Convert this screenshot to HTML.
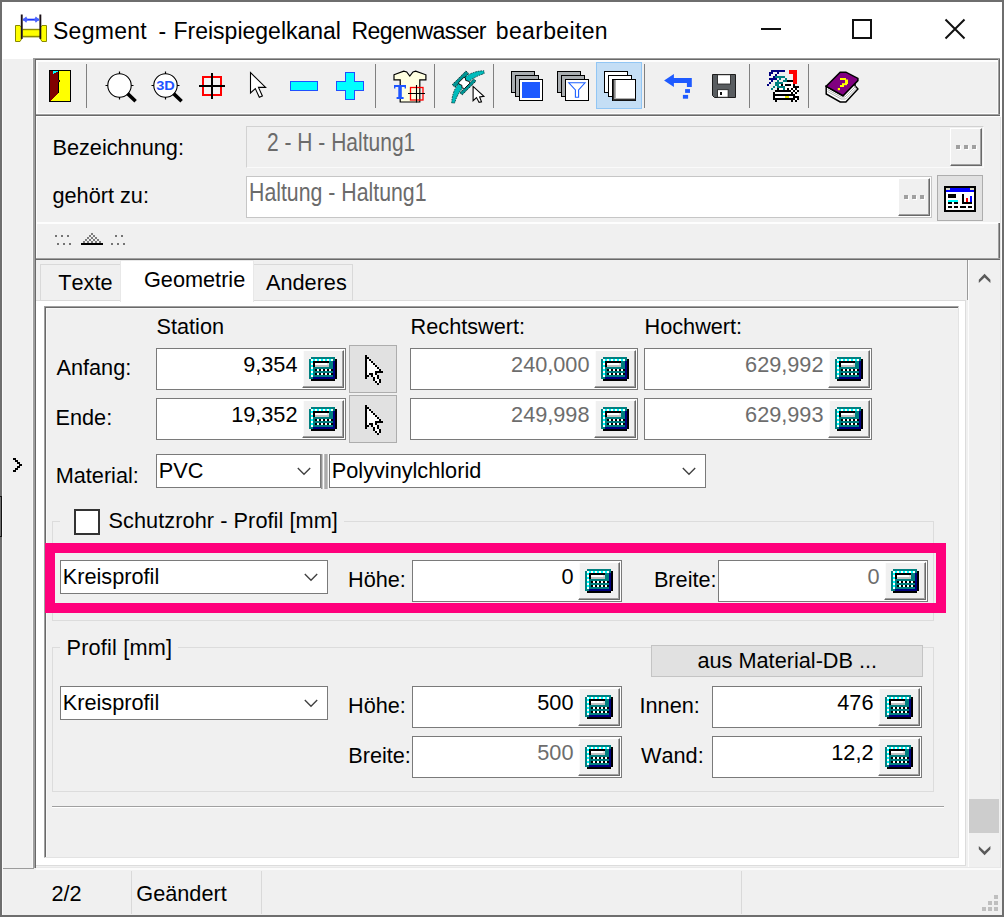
<!DOCTYPE html>
<html><head><meta charset="utf-8"><title>Segment</title>
<style>
html,body{margin:0;padding:0}
body{width:1004px;height:917px;position:relative;overflow:hidden;background:#f0f0f0;font-family:"Liberation Sans",sans-serif}
.a{position:absolute}
.t{position:absolute;white-space:nowrap;line-height:1;font-size:21.33px;font-kerning:none;font-variant-ligatures:none}
svg{display:block;overflow:visible}
</style></head><body>
<div class="a" style="left:0px;top:0px;width:1004px;height:917px;background:#6e6e6e"></div>
<div class="a" style="left:2px;top:2px;width:1000px;height:913px;background:#f0f0f0"></div>
<div class="a" style="left:2px;top:2px;width:1000px;height:57px;background:#fff"></div>
<div class="a" style="left:0px;top:496px;width:2px;height:41px;background:#141414"></div>
<div class="a" style="left:0px;top:497px;width:1px;height:39px;background:#6e6e6e"></div>
<div class="a" style="left:2px;top:59px;width:1px;height:856px;background:#fbfbfb"></div>
<svg class="a" style="left:15px;top:14px" width="32" height="28" viewBox="0 0 32 28"><path d="M0.5 11.5 H5 L6.5 13.5 V25 L5 27.5 H0.5 Z" fill="#ffff00" stroke="#8a8a00" stroke-width="1"/><path d="M31.5 11.5 H27 L25.5 13.5 V25 L27 27.5 H31.5 Z" fill="#ffff00" stroke="#8a8a00" stroke-width="1"/><rect x="7.5" y="14.8" width="17.5" height="8.6" fill="#8a8a00"/><rect x="7.5" y="16.2" width="17.5" height="5.6" fill="#ffff00"/><rect x="5.8" y="0.5" width="1.9" height="24.4" fill="#1a1018"/><rect x="24.4" y="0.5" width="1.9" height="24.4" fill="#1a1018"/><rect x="8" y="4.7" width="16" height="1.9" fill="#1a34ff"/><path d="M7.8 5.6 L11.2 2.4 L12.8 5.6 L11.2 8.8 Z M24.2 5.6 L20.8 2.4 L19.2 5.6 L20.8 8.8 Z" fill="#4a64ff"/></svg>
<span class="t tw" style="left:53px;top:20px;font-size:23px;letter-spacing:0.28px">Segment </span>
<span class="t tw" style="left:158.5px;top:20px;font-size:23px;letter-spacing:0px">- </span>
<span class="t tw" style="left:173.5px;top:20px;font-size:23px;letter-spacing:0px">Freispiegelkanal </span>
<span class="t tw" style="left:351.5px;top:20px;font-size:23px;letter-spacing:-0.56px">Regenwasser </span>
<span class="t tw" style="left:495.8px;top:20px;font-size:23px;letter-spacing:0.35px">bearbeiten</span>
<div class="a" style="left:761px;top:28px;width:20px;height:2px;background:#111"></div>
<div class="a" style="left:852px;top:19px;width:20px;height:20px;border:2px solid #111;box-sizing:border-box"></div>
<svg class="a" style="left:944px;top:18px" width="22" height="22" viewBox="0 0 22 22" ><path d="M1.5 1.5 L20.5 20.5 M20.5 1.5 L1.5 20.5" stroke="#111" stroke-width="2" fill="none"/></svg>
<svg class="a" style="left:12px;top:457px" width="12" height="16" viewBox="0 0 12 16" shape-rendering="crispEdges"><rect x="1" y="1" width="3" height="2" fill="#000"/><rect x="3" y="3" width="3" height="2" fill="#000"/><rect x="5" y="5" width="3" height="2" fill="#000"/><rect x="7" y="7" width="3" height="2" fill="#000"/><rect x="5" y="9" width="3" height="2" fill="#000"/><rect x="3" y="11" width="3" height="2" fill="#000"/><rect x="1" y="13" width="3" height="2" fill="#000"/></svg>
<div class="a" style="left:32px;top:60px;width:1px;height:808px;background:#f7f7f7"></div>
<div class="a" style="left:33px;top:58px;width:2px;height:810px;background:#a0a0a0"></div>
<div class="a" style="left:35px;top:59px;width:1px;height:809px;background:#696969"></div>
<div class="a" style="left:36px;top:60px;width:1px;height:200px;background:#fdfdfd"></div>
<div class="a" style="left:37px;top:60px;width:1px;height:54px;background:#fdfdfd"></div>
<div class="a" style="left:33px;top:58px;width:967px;height:1px;background:#a0a0a0"></div>
<div class="a" style="left:35px;top:59px;width:965px;height:1px;background:#696969"></div>
<div class="a" style="left:36px;top:60px;width:962px;height:2px;background:#fdfdfd"></div>
<div class="a" style="left:997px;top:62px;width:1px;height:52px;background:#f8f8f8"></div>
<div class="a" style="left:998px;top:59px;width:1px;height:57px;background:#a0a0a0"></div>
<div class="a" style="left:999px;top:59px;width:1px;height:57px;background:#696969"></div>
<div class="a" style="left:1000px;top:58px;width:2px;height:60px;background:#fff"></div>
<div class="a" style="left:38px;top:113px;width:960px;height:1px;background:#fdfdfd"></div>
<div class="a" style="left:36px;top:114px;width:964px;height:1px;background:#a0a0a0"></div>
<div class="a" style="left:36px;top:115px;width:964px;height:1px;background:#696969"></div>
<div class="a" style="left:36px;top:116px;width:965px;height:1px;background:#fdfdfd"></div>
<div class="a" style="left:36px;top:222px;width:964px;height:2px;background:#fdfdfd"></div>
<div class="a" style="left:998px;top:223px;width:1px;height:37px;background:#a0a0a0"></div>
<div class="a" style="left:999px;top:223px;width:1px;height:37px;background:#696969"></div>
<div class="a" style="left:36px;top:258px;width:964px;height:1px;background:#a0a0a0"></div>
<div class="a" style="left:36px;top:259px;width:964px;height:1px;background:#696969"></div>
<div class="a" style="left:86px;top:64px;width:1px;height:44px;background:#808080"></div>
<div class="a" style="left:375px;top:64px;width:1px;height:44px;background:#808080"></div>
<div class="a" style="left:434px;top:64px;width:1px;height:44px;background:#808080"></div>
<div class="a" style="left:493px;top:64px;width:1px;height:44px;background:#808080"></div>
<div class="a" style="left:644px;top:64px;width:1px;height:44px;background:#808080"></div>
<div class="a" style="left:749px;top:64px;width:1px;height:44px;background:#808080"></div>
<div class="a" style="left:808px;top:64px;width:1px;height:44px;background:#808080"></div>
<svg class="a" style="left:49px;top:70px" width="22" height="32" viewBox="0 0 22 32" shape-rendering="crispEdges"><rect x="0" y="0" width="22" height="32" fill="#000"/><rect x="1" y="1" width="20" height="30" fill="#ffff00"/><path d="M1 1 H10 V23 L1 31 Z" fill="#800000"/><rect x="9" y="1" width="1" height="22" fill="#000"/><rect x="4" y="1" width="5" height="1" fill="#00ffff"/><rect x="4" y="2" width="3" height="1" fill="#00ffff"/><rect x="4" y="3" width="1" height="1" fill="#00ffff"/><rect x="10" y="10" width="1" height="2" fill="#000"/><rect x="9" y="10" width="1" height="2" fill="#800000"/></svg>
<svg class="a" style="left:104px;top:69px" width="34" height="34" viewBox="0 0 34 34"><circle cx="15.5" cy="16.5" r="11.7" fill="#fff" stroke="#000" stroke-width="1.1"/><path d="M15.5 2.5 V5 M15.5 28 V30.5 M1.5 16.5 H4 M27 16.5 H29.5" stroke="#000" stroke-width="1.2"/><path d="M23.6 24.6 L31.6 32.2" stroke="#000" stroke-width="3.6" stroke-linecap="butt"/></svg>
<svg class="a" style="left:150px;top:69px" width="34" height="34" viewBox="0 0 34 34"><circle cx="15.5" cy="16.5" r="11.7" fill="#fff" stroke="#000" stroke-width="1.1"/><path d="M15.5 2.5 V5 M15.5 28 V30.5 M1.5 16.5 H4 M27 16.5 H29.5" stroke="#000" stroke-width="1.2"/><path d="M23.6 24.6 L31.6 32.2" stroke="#000" stroke-width="3.6" stroke-linecap="butt"/><text x="15.5" y="21.2" text-anchor="middle" font-family="Liberation Sans,sans-serif" font-weight="bold" font-size="13.6" fill="#1e55ff" textLength="18.6" lengthAdjust="spacingAndGlyphs">3D</text></svg>
<svg class="a" style="left:199px;top:73px" width="27" height="27" viewBox="0 0 27 27" shape-rendering="crispEdges"><rect x="4" y="4" width="18" height="18" fill="#f4f4f4" stroke="#ff0000" stroke-width="2"/><rect x="0" y="12" width="26" height="2" fill="#000"/><rect x="12" y="0" width="2" height="26" fill="#000"/></svg>
<svg class="a" style="left:249px;top:71px" width="18" height="28" viewBox="0 0 18 28"><path d="M1.5 1.5 V22 L6.3 17.6 L10.3 26.3 L13.4 24.9 L9.5 16.4 H16.6 Z" fill="#fff" stroke="#000" stroke-width="1.1" stroke-linejoin="miter"/></svg>
<svg class="a" style="left:290px;top:81px" width="28" height="10" viewBox="0 0 28 10" shape-rendering="crispEdges"><rect x="0.5" y="0.5" width="27" height="9" fill="#00ffff" stroke="#1e50ff" stroke-width="1"/></svg>
<svg class="a" style="left:336px;top:72px" width="28" height="28" viewBox="0 0 28 28" shape-rendering="crispEdges"><path d="M9.5 0.5 H18.5 V9.5 H27.5 V18.5 H18.5 V27.5 H9.5 V18.5 H0.5 V9.5 H9.5 Z" fill="#00ffff" stroke="#1e50ff" stroke-width="1"/></svg>
<svg class="a" style="left:392.5px;top:69.5px" width="34" height="34" viewBox="0 0 34 34"><path d="M1 4.8 L10.7 1.2 L13.7 2 L16.8 6 L20 2 L22.7 1.2 L32.9 4.8 V9.8 H26.8 V32 H7.2 V9.8 H1 Z" fill="#ffffe1" stroke="#000" stroke-width="1.2" stroke-linejoin="miter"/><path d="M1 15 H13 V18.5 H11.6 V17 H8.8 V27 H10.6 V29 H3.6 V27 H5.3 V17 H2.4 V18.5 H1 Z" fill="#1e55ff"/><rect x="17.5" y="17.5" width="12.5" height="12.5" fill="none" stroke="#ff0000" stroke-width="1.3"/><path d="M15 23.5 H32 M23.5 15 V32.5" stroke="#000" stroke-width="1.1"/></svg>
<svg class="a" style="left:451px;top:69.5px" width="34" height="34" viewBox="0 0 34 34"><path d="M0.8 33 A32.2 32.2 0 0 1 33 0.8 L33.1 3.6 Q10.6 10.7 3.6 33 Z" fill="#00bcbc" stroke="#003838" stroke-width=".9" stroke-dasharray="1.6 1"/><path d="M1.2 14.7 L14.9 1 L17.6 3.4 L3.9 17.1 Z" fill="#009494" stroke="#002828" stroke-width=".9" stroke-dasharray="1.6 .8"/><path d="M8.9 22.8 L22.6 8.9 L25 11.1 L11.3 24.8 Z" fill="#009494" stroke="#002828" stroke-width=".9" stroke-dasharray="1.6 .8"/><path d="M7.7 12.5 L12.8 7.5 L14.4 7.7 L14.7 10.4 L18.5 11.6 L18.8 13.2 L13.5 18.5 L11.1 18 L10.8 15.2 L8 14.2 Z" fill="#fff" stroke="#000" stroke-width=".9"/><path d="M22.1 16.4 V30.7 L25.5 27.6 L28.1 32.4 L30.5 31.9 L28.6 26.9 L32.9 26.4 Z" fill="#fff" stroke="#000" stroke-width="1.1"/></svg>
<svg class="a" style="left:511px;top:71px" width="33" height="31" viewBox="0 0 33 31"><g shape-rendering="crispEdges"><rect x="0.5" y="0.5" width="23" height="21" fill="#a9adb0" stroke="#000"/><rect x="4.5" y="4.5" width="23" height="21" fill="#a9adb0" stroke="#000"/><rect x="8.5" y="8.5" width="23" height="21" fill="#fff" stroke="#000"/></g><rect x="11" y="11" width="18" height="16" fill="#1e5aff" shape-rendering="crispEdges"/></svg>
<svg class="a" style="left:557px;top:71px" width="33" height="31" viewBox="0 0 33 31"><g shape-rendering="crispEdges"><rect x="0.5" y="0.5" width="23" height="21" fill="#a9adb0" stroke="#000"/><rect x="4.5" y="4.5" width="23" height="21" fill="#a9adb0" stroke="#000"/><rect x="8.5" y="8.5" width="23" height="21" fill="#fff" stroke="#000"/></g><path d="M11.8 11.8 H28 L21.6 19 V26.3 H18.4 V19 Z" fill="#fff" stroke="#1e60ff" stroke-width="1.1" stroke-linejoin="miter"/></svg>
<div class="a" style="left:596px;top:62px;width:46px;height:47px;background:#c4def5;border:1px solid #92c6f4;box-sizing:border-box"></div>
<svg class="a" style="left:604px;top:71px" width="33" height="31" viewBox="0 0 33 31"><g shape-rendering="crispEdges"><rect x="0.5" y="0.5" width="23" height="21" fill="#fff" stroke="#000"/><rect x="4.5" y="4.5" width="23" height="21" fill="#fff" stroke="#000"/><rect x="8.5" y="8.5" width="23" height="21" fill="#fff" stroke="#000"/></g><rect x="9" y="9" width="1.6" height="20.5" fill="#333"/><rect x="9" y="28" width="22.5" height="1.4" fill="#333"/><rect x="10.6" y="9" width="1.2" height="19" fill="#9a9a9a"/><rect x="10.6" y="27" width="20.5" height="1" fill="#b0b0b0"/></svg>
<svg class="a" style="left:663px;top:74px" width="30" height="26" viewBox="0 0 30 26"><path d="M1.1 6.4 L10.9 0.1 V3.9 H28.8 V13.1 H23.9 V9 H10.9 V13.1 Z" fill="#1e5aff"/><rect x="22.1" y="15.1" width="4.9" height="3.8" fill="#1e5aff"/><rect x="19.9" y="20.9" width="5.2" height="3.8" fill="#1e5aff"/></svg>
<svg class="a" style="left:712px;top:74px" width="24" height="24" viewBox="0 0 24 24"><path d="M0.5 0.5 H23.5 V23.5 H2.5 L0.5 21.5 Z" fill="#595d60" stroke="#1c1c1c" stroke-width="1"/><rect x="5.6" y="0.8" width="12.8" height="9.2" fill="#fff" stroke="#1c1c1c" stroke-width=".8"/><rect x="5.6" y="15.7" width="10.5" height="7.5" fill="#fff" stroke="#1c1c1c" stroke-width=".8"/><rect x="8" y="18" width="2" height="3" fill="#111"/></svg>
<svg class="a" style="left:762px;top:64px" width="44" height="44" viewBox="0 0 44 44" shape-rendering="crispEdges"><rect x="9" y="6" width="14" height="2" fill="#000080"/><rect x="27" y="6" width="8" height="2" fill="#ff0000"/><rect x="7" y="8" width="4" height="2" fill="#000080"/><rect x="15" y="8" width="2" height="2" fill="#000080"/><rect x="27" y="8" width="8" height="2" fill="#ff0000"/><rect x="7" y="10" width="2" height="2" fill="#000080"/><rect x="13" y="10" width="2" height="2" fill="#000080"/><rect x="31" y="10" width="4" height="2" fill="#ff0000"/><rect x="11" y="12" width="2" height="2" fill="#000080"/><rect x="13" y="12" width="10" height="2" fill="#008080"/><rect x="31" y="12" width="4" height="2" fill="#ff0000"/><rect x="7" y="14" width="8" height="2" fill="#000080"/><rect x="17" y="14" width="2" height="2" fill="#008080"/><rect x="23" y="14" width="2" height="2" fill="#008080"/><rect x="31" y="14" width="4" height="2" fill="#ff0000"/><rect x="9" y="16" width="2" height="2" fill="#000080"/><rect x="15" y="16" width="2" height="2" fill="#008080"/><rect x="21" y="16" width="4" height="2" fill="#008080"/><rect x="25" y="16" width="6" height="2" fill="#000"/><rect x="31" y="16" width="4" height="2" fill="#ff0000"/><rect x="7" y="18" width="2" height="2" fill="#000080"/><rect x="13" y="18" width="8" height="2" fill="#008080"/><rect x="21" y="18" width="10" height="2" fill="#fff"/><rect x="31" y="18" width="4" height="2" fill="#ff0000"/><rect x="5" y="20" width="2" height="2" fill="#000080"/><rect x="13" y="20" width="4" height="2" fill="#008080"/><rect x="17" y="20" width="2" height="2" fill="#fff"/><rect x="19" y="20" width="2" height="2" fill="#000"/><rect x="21" y="20" width="2" height="2" fill="#fff"/><rect x="23" y="20" width="6" height="2" fill="#000"/><rect x="29" y="20" width="2" height="2" fill="#fff"/><rect x="31" y="20" width="2" height="2" fill="#000"/><rect x="11" y="22" width="2" height="2" fill="#008080"/><rect x="15" y="22" width="8" height="2" fill="#008080"/><rect x="23" y="22" width="8" height="2" fill="#fff"/><rect x="31" y="22" width="6" height="2" fill="#000"/><rect x="9" y="24" width="2" height="2" fill="#008080"/><rect x="15" y="24" width="2" height="2" fill="#000"/><rect x="17" y="24" width="4" height="2" fill="#fff"/><rect x="21" y="24" width="2" height="2" fill="#008080"/><rect x="23" y="24" width="2" height="2" fill="#fff"/><rect x="25" y="24" width="2" height="2" fill="#000"/><rect x="27" y="24" width="2" height="2" fill="#fff"/><rect x="29" y="24" width="2" height="2" fill="#000"/><rect x="31" y="24" width="2" height="2" fill="#fff"/><rect x="33" y="24" width="2" height="2" fill="#000"/><rect x="35" y="24" width="2" height="2" fill="#fff"/><rect x="13" y="26" width="16" height="2" fill="#000"/><rect x="29" y="26" width="2" height="2" fill="#fff"/><rect x="31" y="26" width="2" height="2" fill="#000"/><rect x="33" y="26" width="2" height="2" fill="#fff"/><rect x="35" y="26" width="2" height="2" fill="#000"/><rect x="11" y="28" width="2" height="2" fill="#000"/><rect x="13" y="28" width="16" height="2" fill="#fff"/><rect x="29" y="28" width="2" height="2" fill="#000"/><rect x="31" y="28" width="2" height="2" fill="#fff"/><rect x="33" y="28" width="2" height="2" fill="#000"/><rect x="11" y="30" width="22" height="2" fill="#000"/><rect x="33" y="30" width="4" height="2" fill="#fff"/><rect x="11" y="32" width="2" height="2" fill="#000"/><rect x="13" y="32" width="10" height="2" fill="#fff"/><rect x="23" y="32" width="4" height="2" fill="#e8e800"/><rect x="27" y="32" width="4" height="2" fill="#fff"/><rect x="31" y="32" width="6" height="2" fill="#000"/><rect x="11" y="34" width="22" height="2" fill="#000"/><rect x="33" y="34" width="2" height="2" fill="#fff"/><rect x="35" y="34" width="2" height="2" fill="#000"/><rect x="13" y="36" width="2" height="2" fill="#000"/><rect x="29" y="36" width="2" height="2" fill="#000"/><rect x="33" y="36" width="2" height="2" fill="#000"/></svg>
<svg class="a" style="left:820px;top:64px" width="44" height="44" viewBox="0 0 44 44"><path d="M6.2 22.3 V30 L20.2 37.9 H25.9 L37.9 25 L35 21.8 V19 L23 31.7 Z" fill="#fff" stroke="#000" stroke-width="1.5" stroke-linejoin="miter"/><path d="M7.5 25.5 L21 33 H25 L35.5 22.5 M7.5 27.5 L21 35 H25.5 L36.5 24" stroke="#a8a8a8" stroke-width=".9" fill="none"/><path d="M6.2 22.3 L20.2 8.2 H25.9 L37.9 14.4 V16.6 L23 31.7 Z" fill="#800080" stroke="#000" stroke-width="1.5" stroke-linejoin="miter"/><rect x="20" y="14" width="6" height="2" fill="#ffff00"/><rect x="25" y="15.5" width="3" height="4.5" fill="#ffff00"/><rect x="22" y="19.2" width="5" height="2" fill="#ffff00"/><rect x="20" y="21" width="4" height="2" fill="#ffff00"/><rect x="17.8" y="24" width="2.2" height="2.2" fill="#ffff00"/></svg>
<span class="t" style="left:52.50px;top:136.65px;font-size:21.7px;color:#000;">Bezeichnung:</span>
<span class="t" style="left:52.50px;top:184.65px;font-size:21.7px;color:#000;">gehört zu:</span>
<div class="a" style="left:246px;top:126px;width:738px;height:42px;border:1px solid #d2d2d2;border-bottom-color:#fafafa;border-right-color:#fafafa;box-sizing:border-box;background:#f0f0f0"></div>
<div class="a" style="left:246px;top:176px;width:686px;height:42px;border:1px solid #c6c6c6;box-sizing:border-box;background:#fff"></div>
<span class="t px" style="left:267.3px;top:129.50px;font-size:25px;color:#6b6b6b;transform-origin:0 0;transform:scaleX(0.8402)">2 - H - Haltung1</span>
<span class="t px" style="left:248.6px;top:179.50px;font-size:25px;color:#6b6b6b;transform-origin:0 0;transform:scaleX(0.8517)">Haltung - Haltung1</span>
<div class="a" style="left:950px;top:128px;width:32px;height:38px;background:#f0f0f0;box-sizing:border-box;border-top:1px solid #fff;border-left:1px solid #fff;border-right:1px solid #696969;border-bottom:1px solid #696969"></div>
<div class="a" style="left:980px;top:129px;width:1px;height:36px;background:#a0a0a0"></div>
<div class="a" style="left:951px;top:164px;width:30px;height:1px;background:#a0a0a0"></div>
<div class="a" style="left:957px;top:146px;width:4px;height:4px;background:#fff"></div>
<div class="a" style="left:956px;top:145px;width:4px;height:4px;background:#a0a0a0"></div>
<div class="a" style="left:965px;top:146px;width:4px;height:4px;background:#fff"></div>
<div class="a" style="left:964px;top:145px;width:4px;height:4px;background:#a0a0a0"></div>
<div class="a" style="left:973px;top:146px;width:4px;height:4px;background:#fff"></div>
<div class="a" style="left:972px;top:145px;width:4px;height:4px;background:#a0a0a0"></div>
<div class="a" style="left:898px;top:178px;width:32px;height:38px;background:#f0f0f0;box-sizing:border-box;border-top:1px solid #fff;border-left:1px solid #fff;border-right:1px solid #696969;border-bottom:1px solid #696969"></div>
<div class="a" style="left:928px;top:179px;width:1px;height:36px;background:#a0a0a0"></div>
<div class="a" style="left:899px;top:214px;width:30px;height:1px;background:#a0a0a0"></div>
<div class="a" style="left:905px;top:196px;width:4px;height:4px;background:#fff"></div>
<div class="a" style="left:904px;top:195px;width:4px;height:4px;background:#a0a0a0"></div>
<div class="a" style="left:913px;top:196px;width:4px;height:4px;background:#fff"></div>
<div class="a" style="left:912px;top:195px;width:4px;height:4px;background:#a0a0a0"></div>
<div class="a" style="left:921px;top:196px;width:4px;height:4px;background:#fff"></div>
<div class="a" style="left:920px;top:195px;width:4px;height:4px;background:#a0a0a0"></div>
<div class="a" style="left:937px;top:175px;width:46px;height:46px;background:#e1e1e1;border:1px solid #adadad;box-sizing:border-box"></div>
<svg class="a" style="left:944px;top:186px" width="32" height="26" viewBox="0 0 16 13" shape-rendering="crispEdges"><rect x="0" y="0" width="16" height="13" fill="#000"/><rect x="1" y="1" width="14" height="11" fill="#fff"/><rect x="1" y="1" width="14" height="2" fill="#0000ff"/><rect x="1" y="1" width="2" height="1" fill="#d6d6c8"/><rect x="13" y="1" width="2" height="1" fill="#d6d6c8"/><rect x="2" y="4" width="4" height="2" fill="#000"/><rect x="9" y="4" width="1" height="5" fill="#000"/><rect x="9" y="8" width="5" height="1" fill="#000"/><rect x="13" y="5" width="1" height="3" fill="#0000ff"/><rect x="11" y="6" width="1" height="2" fill="#ff0000"/><rect x="2" y="7" width="5" height="1" fill="#00ffff"/><rect x="2" y="8" width="2" height="1" fill="#000"/><rect x="5" y="8" width="2" height="1" fill="#000"/><rect x="2" y="10" width="2" height="1" fill="#000"/><rect x="5" y="10" width="2" height="1" fill="#000"/><rect x="8" y="10" width="3" height="1" fill="#000"/><rect x="12" y="10" width="2" height="1" fill="#000"/></svg>
<svg class="a" style="left:46px;top:224px" width="90" height="30" viewBox="0 0 90 30" shape-rendering="crispEdges"><rect x="9" y="11" width="2" height="2" fill="#747474"/><rect x="15" y="11" width="2" height="2" fill="#747474"/><rect x="21" y="11" width="2" height="2" fill="#747474"/><rect x="11" y="19" width="2" height="2" fill="#747474"/><rect x="17" y="19" width="2" height="2" fill="#747474"/><rect x="23" y="19" width="2" height="2" fill="#747474"/><rect x="69" y="11" width="2" height="2" fill="#747474"/><rect x="75" y="11" width="2" height="2" fill="#747474"/><rect x="65" y="19" width="2" height="2" fill="#747474"/><rect x="71" y="19" width="2" height="2" fill="#747474"/><rect x="77" y="19" width="2" height="2" fill="#747474"/><rect x="45" y="9" width="2" height="2" fill="#7c7c7c"/><rect x="43" y="11" width="2" height="2" fill="#7c7c7c"/><rect x="47" y="11" width="2" height="2" fill="#7c7c7c"/><rect x="41" y="13" width="2" height="2" fill="#7c7c7c"/><rect x="45" y="13" width="2" height="2" fill="#7c7c7c"/><rect x="49" y="13" width="2" height="2" fill="#7c7c7c"/><rect x="39" y="15" width="2" height="2" fill="#7c7c7c"/><rect x="43" y="15" width="2" height="2" fill="#7c7c7c"/><rect x="47" y="15" width="2" height="2" fill="#7c7c7c"/><rect x="51" y="15" width="2" height="2" fill="#7c7c7c"/><rect x="37" y="17" width="2" height="2" fill="#7c7c7c"/><rect x="41" y="17" width="2" height="2" fill="#7c7c7c"/><rect x="45" y="17" width="2" height="2" fill="#7c7c7c"/><rect x="49" y="17" width="2" height="2" fill="#7c7c7c"/><rect x="53" y="17" width="2" height="2" fill="#7c7c7c"/><rect x="35" y="19" width="22" height="2" fill="#000"/></svg>
<div class="a" style="left:967px;top:260px;width:1px;height:40px;background:#9a9a9a"></div>
<div class="a" style="left:968px;top:260px;width:1px;height:607px;background:#fcfcfc"></div>
<div class="a" style="left:1000px;top:117px;width:1px;height:751px;background:#e4e4e4"></div>
<div class="a" style="left:1001px;top:117px;width:1px;height:752px;background:#fdfdfd"></div>
<svg class="a" style="left:978px;top:273px" width="13" height="11" viewBox="0 0 13 11" ><path d="M0.8 10.1 L6.55 4.4 L12.4 10.1 V6.8 L6.55 0.8 L0.8 6.8 Z" fill="#5a5a5a"/></svg>
<svg class="a" style="left:978px;top:845px" width="13" height="11" viewBox="0 0 13 11" ><path d="M0.8 0.9 L6.55 6.6 L12.4 0.9 V4.2 L6.55 10.2 L0.8 4.2 Z" fill="#5a5a5a"/></svg>
<div class="a" style="left:969px;top:799px;width:30px;height:34px;background:#cdcdcd"></div>
<div class="a" style="left:36px;top:300px;width:930px;height:566px;background:#dcdcdc"></div>
<div class="a" style="left:36px;top:301px;width:929px;height:564px;background:#fff"></div>
<div class="a" style="left:40px;top:264px;width:81px;height:37px;background:#f0f0f0;border:1px solid #d9d9d9;box-sizing:border-box"></div>
<div class="a" style="left:253px;top:264px;width:100px;height:37px;background:#f0f0f0;border:1px solid #d9d9d9;box-sizing:border-box"></div>
<div class="a" style="left:120px;top:260px;width:134px;height:42px;background:#fff;border:1px solid #e8e8e8;border-bottom:none;box-sizing:border-box"></div>
<span class="t" style="left:58.30px;top:272.35px;font-size:21.7px;color:#000;">Texte</span>
<span class="t" style="left:144.00px;top:268.85px;font-size:21.7px;color:#000;">Geometrie</span>
<span class="t" style="left:266.00px;top:272.35px;font-size:21.7px;color:#000;">Anderes</span>
<div class="a" style="left:44px;top:306px;width:915px;height:552px;background:#f0f0f0;box-sizing:border-box;border-top:1px solid #a0a0a0;border-left:1px solid #a0a0a0;border-right:1px solid #e3e3e3;border-bottom:1px solid #e3e3e3"></div>
<div class="a" style="left:45px;top:307px;width:913px;height:1px;background:#696969"></div>
<div class="a" style="left:45px;top:307px;width:1px;height:550px;background:#696969"></div>
<div class="a" style="left:46px;top:308px;width:912px;height:1px;background:#f8f8f8"></div>
<div class="a" style="left:46px;top:308px;width:1px;height:549px;background:#f8f8f8"></div>
<span class="t" style="left:156.50px;top:316.15px;font-size:21.7px;color:#000;">Station</span>
<span class="t" style="left:410.60px;top:316.15px;font-size:21.7px;color:#000;">Rechtswert:</span>
<span class="t" style="left:644.50px;top:316.15px;font-size:21.7px;color:#000;">Hochwert:</span>
<span class="t" style="left:56.50px;top:356.65px;font-size:21.7px;color:#000;">Anfang:</span>
<span class="t" style="left:55.50px;top:406.65px;font-size:21.7px;color:#000;">Ende:</span>
<div class="a" style="left:156px;top:348px;width:190px;height:42px;background:#fff;border:1px solid #7a7a7a;box-sizing:border-box"></div>
<div class="a" style="left:302px;top:350px;width:42px;height:38px;background:#f0f0f0;box-sizing:border-box;border-top:1px solid #fff;border-left:1px solid #fff;border-right:1px solid #696969;border-bottom:1px solid #696969"></div>
<div class="a" style="left:342px;top:351px;width:1px;height:36px;background:#a0a0a0"></div>
<div class="a" style="left:303px;top:386px;width:40px;height:1px;background:#a0a0a0"></div>
<div class="a" style="left:303px;top:351px;width:1px;height:35px;background:#fbfbfb"></div>
<svg class="a" style="left:309px;top:357px" width="28" height="24" viewBox="0 0 14 12" shape-rendering="crispEdges"><rect x="1" y="0" width="12" height="1" fill="#008080"/><rect x="0" y="1" width="13" height="10" fill="#008080"/><rect x="13" y="1" width="1" height="10" fill="#000"/><rect x="1" y="11" width="12" height="1" fill="#000"/><rect x="2" y="10" width="11" height="1" fill="#000080"/><rect x="12" y="2" width="1" height="9" fill="#000080"/><rect x="1" y="1" width="1" height="1" fill="#fff"/><rect x="2" y="1" width="1" height="1" fill="#00ffff"/><rect x="3" y="1" width="1" height="1" fill="#fff"/><rect x="4" y="1" width="1" height="1" fill="#00ffff"/><rect x="5" y="1" width="1" height="1" fill="#fff"/><rect x="6" y="1" width="1" height="1" fill="#00ffff"/><rect x="7" y="1" width="1" height="1" fill="#fff"/><rect x="8" y="1" width="1" height="1" fill="#00ffff"/><rect x="9" y="1" width="1" height="1" fill="#fff"/><rect x="10" y="1" width="1" height="1" fill="#00ffff"/><rect x="11" y="1" width="1" height="1" fill="#fff"/><rect x="1" y="2" width="1" height="1" fill="#00ffff"/><rect x="1" y="3" width="1" height="1" fill="#fff"/><rect x="1" y="4" width="1" height="1" fill="#00ffff"/><rect x="1" y="5" width="1" height="1" fill="#fff"/><rect x="1" y="6" width="1" height="1" fill="#00ffff"/><rect x="1" y="7" width="1" height="1" fill="#fff"/><rect x="1" y="8" width="1" height="1" fill="#00ffff"/><rect x="1" y="9" width="1" height="1" fill="#fff"/><rect x="2" y="2" width="8" height="1" fill="#000"/><rect x="2" y="3" width="1" height="2" fill="#000"/><rect x="3" y="3" width="6" height="1" fill="#fff"/><rect x="9" y="3" width="1" height="1" fill="#e0e0e0"/><rect x="3" y="4" width="7" height="1" fill="#c0c0c0"/><rect x="3" y="6" width="1" height="1" fill="#000"/><rect x="4" y="6" width="1" height="1" fill="#fff"/><rect x="5" y="6" width="1" height="1" fill="#000"/><rect x="6" y="6" width="1" height="1" fill="#fff"/><rect x="7" y="6" width="1" height="1" fill="#000"/><rect x="8" y="6" width="1" height="1" fill="#fff"/><rect x="9" y="6" width="1" height="1" fill="#000"/><rect x="10" y="6" width="1" height="1" fill="#fff"/><rect x="11" y="6" width="1" height="1" fill="#000"/><rect x="3" y="8" width="1" height="1" fill="#000"/><rect x="4" y="8" width="1" height="1" fill="#fff"/><rect x="5" y="8" width="1" height="1" fill="#000"/><rect x="6" y="8" width="1" height="1" fill="#fff"/><rect x="7" y="8" width="1" height="1" fill="#000"/><rect x="8" y="8" width="1" height="1" fill="#fff"/><rect x="9" y="8" width="1" height="1" fill="#000"/><rect x="10" y="8" width="1" height="1" fill="#fff"/><rect x="11" y="8" width="1" height="1" fill="#000"/></svg>
<span class="t" style="right:706.50px;top:353.90px;font-size:21.7px;color:#000;">9,354</span>
<div class="a" style="left:156px;top:398px;width:190px;height:42px;background:#fff;border:1px solid #7a7a7a;box-sizing:border-box"></div>
<div class="a" style="left:302px;top:400px;width:42px;height:38px;background:#f0f0f0;box-sizing:border-box;border-top:1px solid #fff;border-left:1px solid #fff;border-right:1px solid #696969;border-bottom:1px solid #696969"></div>
<div class="a" style="left:342px;top:401px;width:1px;height:36px;background:#a0a0a0"></div>
<div class="a" style="left:303px;top:436px;width:40px;height:1px;background:#a0a0a0"></div>
<div class="a" style="left:303px;top:401px;width:1px;height:35px;background:#fbfbfb"></div>
<svg class="a" style="left:309px;top:407px" width="28" height="24" viewBox="0 0 14 12" shape-rendering="crispEdges"><rect x="1" y="0" width="12" height="1" fill="#008080"/><rect x="0" y="1" width="13" height="10" fill="#008080"/><rect x="13" y="1" width="1" height="10" fill="#000"/><rect x="1" y="11" width="12" height="1" fill="#000"/><rect x="2" y="10" width="11" height="1" fill="#000080"/><rect x="12" y="2" width="1" height="9" fill="#000080"/><rect x="1" y="1" width="1" height="1" fill="#fff"/><rect x="2" y="1" width="1" height="1" fill="#00ffff"/><rect x="3" y="1" width="1" height="1" fill="#fff"/><rect x="4" y="1" width="1" height="1" fill="#00ffff"/><rect x="5" y="1" width="1" height="1" fill="#fff"/><rect x="6" y="1" width="1" height="1" fill="#00ffff"/><rect x="7" y="1" width="1" height="1" fill="#fff"/><rect x="8" y="1" width="1" height="1" fill="#00ffff"/><rect x="9" y="1" width="1" height="1" fill="#fff"/><rect x="10" y="1" width="1" height="1" fill="#00ffff"/><rect x="11" y="1" width="1" height="1" fill="#fff"/><rect x="1" y="2" width="1" height="1" fill="#00ffff"/><rect x="1" y="3" width="1" height="1" fill="#fff"/><rect x="1" y="4" width="1" height="1" fill="#00ffff"/><rect x="1" y="5" width="1" height="1" fill="#fff"/><rect x="1" y="6" width="1" height="1" fill="#00ffff"/><rect x="1" y="7" width="1" height="1" fill="#fff"/><rect x="1" y="8" width="1" height="1" fill="#00ffff"/><rect x="1" y="9" width="1" height="1" fill="#fff"/><rect x="2" y="2" width="8" height="1" fill="#000"/><rect x="2" y="3" width="1" height="2" fill="#000"/><rect x="3" y="3" width="6" height="1" fill="#fff"/><rect x="9" y="3" width="1" height="1" fill="#e0e0e0"/><rect x="3" y="4" width="7" height="1" fill="#c0c0c0"/><rect x="3" y="6" width="1" height="1" fill="#000"/><rect x="4" y="6" width="1" height="1" fill="#fff"/><rect x="5" y="6" width="1" height="1" fill="#000"/><rect x="6" y="6" width="1" height="1" fill="#fff"/><rect x="7" y="6" width="1" height="1" fill="#000"/><rect x="8" y="6" width="1" height="1" fill="#fff"/><rect x="9" y="6" width="1" height="1" fill="#000"/><rect x="10" y="6" width="1" height="1" fill="#fff"/><rect x="11" y="6" width="1" height="1" fill="#000"/><rect x="3" y="8" width="1" height="1" fill="#000"/><rect x="4" y="8" width="1" height="1" fill="#fff"/><rect x="5" y="8" width="1" height="1" fill="#000"/><rect x="6" y="8" width="1" height="1" fill="#fff"/><rect x="7" y="8" width="1" height="1" fill="#000"/><rect x="8" y="8" width="1" height="1" fill="#fff"/><rect x="9" y="8" width="1" height="1" fill="#000"/><rect x="10" y="8" width="1" height="1" fill="#fff"/><rect x="11" y="8" width="1" height="1" fill="#000"/></svg>
<span class="t" style="right:706.50px;top:403.90px;font-size:21.7px;color:#000;">19,352</span>
<div class="a" style="left:349px;top:345px;width:48px;height:48px;background:#e1e1e1;border:1px solid #adadad;box-sizing:border-box"></div>
<svg class="a" style="left:365px;top:355px" width="18" height="30" viewBox="0 0 9 15" shape-rendering="crispEdges"><rect x="1" y="2" width="1" height="1" fill="#fff"/><rect x="1" y="3" width="1" height="1" fill="#fff"/><rect x="2" y="3" width="1" height="1" fill="#fff"/><rect x="1" y="4" width="1" height="1" fill="#fff"/><rect x="2" y="4" width="1" height="1" fill="#fff"/><rect x="3" y="4" width="1" height="1" fill="#fff"/><rect x="1" y="5" width="1" height="1" fill="#fff"/><rect x="2" y="5" width="1" height="1" fill="#fff"/><rect x="3" y="5" width="1" height="1" fill="#fff"/><rect x="4" y="5" width="1" height="1" fill="#fff"/><rect x="1" y="6" width="1" height="1" fill="#fff"/><rect x="2" y="6" width="1" height="1" fill="#fff"/><rect x="3" y="6" width="1" height="1" fill="#fff"/><rect x="4" y="6" width="1" height="1" fill="#fff"/><rect x="5" y="6" width="1" height="1" fill="#fff"/><rect x="1" y="7" width="1" height="1" fill="#fff"/><rect x="2" y="7" width="1" height="1" fill="#fff"/><rect x="3" y="7" width="1" height="1" fill="#fff"/><rect x="4" y="7" width="1" height="1" fill="#fff"/><rect x="5" y="7" width="1" height="1" fill="#fff"/><rect x="6" y="7" width="1" height="1" fill="#fff"/><rect x="1" y="8" width="1" height="1" fill="#fff"/><rect x="2" y="8" width="1" height="1" fill="#fff"/><rect x="3" y="8" width="1" height="1" fill="#fff"/><rect x="4" y="8" width="1" height="1" fill="#fff"/><rect x="1" y="9" width="1" height="1" fill="#fff"/><rect x="4" y="9" width="1" height="1" fill="#fff"/><rect x="4" y="10" width="1" height="1" fill="#fff"/><rect x="5" y="10" width="1" height="1" fill="#fff"/><rect x="5" y="11" width="1" height="1" fill="#fff"/><rect x="5" y="12" width="1" height="1" fill="#fff"/><rect x="6" y="12" width="1" height="1" fill="#fff"/><rect x="6" y="13" width="1" height="1" fill="#fff"/><rect x="0" y="0" width="1" height="1" fill="#000"/><rect x="0" y="1" width="1" height="1" fill="#000"/><rect x="1" y="1" width="1" height="1" fill="#000"/><rect x="0" y="2" width="1" height="1" fill="#000"/><rect x="2" y="2" width="1" height="1" fill="#000"/><rect x="0" y="3" width="1" height="1" fill="#000"/><rect x="3" y="3" width="1" height="1" fill="#000"/><rect x="0" y="4" width="1" height="1" fill="#000"/><rect x="4" y="4" width="1" height="1" fill="#000"/><rect x="0" y="5" width="1" height="1" fill="#000"/><rect x="5" y="5" width="1" height="1" fill="#000"/><rect x="0" y="6" width="1" height="1" fill="#000"/><rect x="6" y="6" width="1" height="1" fill="#000"/><rect x="0" y="7" width="1" height="1" fill="#000"/><rect x="7" y="7" width="1" height="1" fill="#000"/><rect x="0" y="8" width="1" height="1" fill="#000"/><rect x="5" y="8" width="1" height="1" fill="#000"/><rect x="6" y="8" width="1" height="1" fill="#000"/><rect x="7" y="8" width="1" height="1" fill="#000"/><rect x="8" y="8" width="1" height="1" fill="#000"/><rect x="0" y="9" width="1" height="1" fill="#000"/><rect x="2" y="9" width="1" height="1" fill="#000"/><rect x="3" y="9" width="1" height="1" fill="#000"/><rect x="5" y="9" width="1" height="1" fill="#000"/><rect x="0" y="10" width="1" height="1" fill="#000"/><rect x="1" y="10" width="1" height="1" fill="#000"/><rect x="3" y="10" width="1" height="1" fill="#000"/><rect x="6" y="10" width="1" height="1" fill="#000"/><rect x="0" y="11" width="1" height="1" fill="#000"/><rect x="4" y="11" width="1" height="1" fill="#000"/><rect x="6" y="11" width="1" height="1" fill="#000"/><rect x="4" y="12" width="1" height="1" fill="#000"/><rect x="7" y="12" width="1" height="1" fill="#000"/><rect x="5" y="13" width="1" height="1" fill="#000"/><rect x="7" y="13" width="1" height="1" fill="#000"/><rect x="6" y="14" width="1" height="1" fill="#000"/></svg>
<div class="a" style="left:349px;top:395px;width:48px;height:48px;background:#e1e1e1;border:1px solid #adadad;box-sizing:border-box"></div>
<svg class="a" style="left:365px;top:405px" width="18" height="30" viewBox="0 0 9 15" shape-rendering="crispEdges"><rect x="1" y="2" width="1" height="1" fill="#fff"/><rect x="1" y="3" width="1" height="1" fill="#fff"/><rect x="2" y="3" width="1" height="1" fill="#fff"/><rect x="1" y="4" width="1" height="1" fill="#fff"/><rect x="2" y="4" width="1" height="1" fill="#fff"/><rect x="3" y="4" width="1" height="1" fill="#fff"/><rect x="1" y="5" width="1" height="1" fill="#fff"/><rect x="2" y="5" width="1" height="1" fill="#fff"/><rect x="3" y="5" width="1" height="1" fill="#fff"/><rect x="4" y="5" width="1" height="1" fill="#fff"/><rect x="1" y="6" width="1" height="1" fill="#fff"/><rect x="2" y="6" width="1" height="1" fill="#fff"/><rect x="3" y="6" width="1" height="1" fill="#fff"/><rect x="4" y="6" width="1" height="1" fill="#fff"/><rect x="5" y="6" width="1" height="1" fill="#fff"/><rect x="1" y="7" width="1" height="1" fill="#fff"/><rect x="2" y="7" width="1" height="1" fill="#fff"/><rect x="3" y="7" width="1" height="1" fill="#fff"/><rect x="4" y="7" width="1" height="1" fill="#fff"/><rect x="5" y="7" width="1" height="1" fill="#fff"/><rect x="6" y="7" width="1" height="1" fill="#fff"/><rect x="1" y="8" width="1" height="1" fill="#fff"/><rect x="2" y="8" width="1" height="1" fill="#fff"/><rect x="3" y="8" width="1" height="1" fill="#fff"/><rect x="4" y="8" width="1" height="1" fill="#fff"/><rect x="1" y="9" width="1" height="1" fill="#fff"/><rect x="4" y="9" width="1" height="1" fill="#fff"/><rect x="4" y="10" width="1" height="1" fill="#fff"/><rect x="5" y="10" width="1" height="1" fill="#fff"/><rect x="5" y="11" width="1" height="1" fill="#fff"/><rect x="5" y="12" width="1" height="1" fill="#fff"/><rect x="6" y="12" width="1" height="1" fill="#fff"/><rect x="6" y="13" width="1" height="1" fill="#fff"/><rect x="0" y="0" width="1" height="1" fill="#000"/><rect x="0" y="1" width="1" height="1" fill="#000"/><rect x="1" y="1" width="1" height="1" fill="#000"/><rect x="0" y="2" width="1" height="1" fill="#000"/><rect x="2" y="2" width="1" height="1" fill="#000"/><rect x="0" y="3" width="1" height="1" fill="#000"/><rect x="3" y="3" width="1" height="1" fill="#000"/><rect x="0" y="4" width="1" height="1" fill="#000"/><rect x="4" y="4" width="1" height="1" fill="#000"/><rect x="0" y="5" width="1" height="1" fill="#000"/><rect x="5" y="5" width="1" height="1" fill="#000"/><rect x="0" y="6" width="1" height="1" fill="#000"/><rect x="6" y="6" width="1" height="1" fill="#000"/><rect x="0" y="7" width="1" height="1" fill="#000"/><rect x="7" y="7" width="1" height="1" fill="#000"/><rect x="0" y="8" width="1" height="1" fill="#000"/><rect x="5" y="8" width="1" height="1" fill="#000"/><rect x="6" y="8" width="1" height="1" fill="#000"/><rect x="7" y="8" width="1" height="1" fill="#000"/><rect x="8" y="8" width="1" height="1" fill="#000"/><rect x="0" y="9" width="1" height="1" fill="#000"/><rect x="2" y="9" width="1" height="1" fill="#000"/><rect x="3" y="9" width="1" height="1" fill="#000"/><rect x="5" y="9" width="1" height="1" fill="#000"/><rect x="0" y="10" width="1" height="1" fill="#000"/><rect x="1" y="10" width="1" height="1" fill="#000"/><rect x="3" y="10" width="1" height="1" fill="#000"/><rect x="6" y="10" width="1" height="1" fill="#000"/><rect x="0" y="11" width="1" height="1" fill="#000"/><rect x="4" y="11" width="1" height="1" fill="#000"/><rect x="6" y="11" width="1" height="1" fill="#000"/><rect x="4" y="12" width="1" height="1" fill="#000"/><rect x="7" y="12" width="1" height="1" fill="#000"/><rect x="5" y="13" width="1" height="1" fill="#000"/><rect x="7" y="13" width="1" height="1" fill="#000"/><rect x="6" y="14" width="1" height="1" fill="#000"/></svg>
<div class="a" style="left:410px;top:348px;width:228px;height:42px;background:#fff;border:1px solid #7a7a7a;box-sizing:border-box"></div>
<div class="a" style="left:594px;top:350px;width:42px;height:38px;background:#f0f0f0;box-sizing:border-box;border-top:1px solid #fff;border-left:1px solid #fff;border-right:1px solid #696969;border-bottom:1px solid #696969"></div>
<div class="a" style="left:634px;top:351px;width:1px;height:36px;background:#a0a0a0"></div>
<div class="a" style="left:595px;top:386px;width:40px;height:1px;background:#a0a0a0"></div>
<div class="a" style="left:595px;top:351px;width:1px;height:35px;background:#fbfbfb"></div>
<svg class="a" style="left:601px;top:357px" width="28" height="24" viewBox="0 0 14 12" shape-rendering="crispEdges"><rect x="1" y="0" width="12" height="1" fill="#008080"/><rect x="0" y="1" width="13" height="10" fill="#008080"/><rect x="13" y="1" width="1" height="10" fill="#000"/><rect x="1" y="11" width="12" height="1" fill="#000"/><rect x="2" y="10" width="11" height="1" fill="#000080"/><rect x="12" y="2" width="1" height="9" fill="#000080"/><rect x="1" y="1" width="1" height="1" fill="#fff"/><rect x="2" y="1" width="1" height="1" fill="#00ffff"/><rect x="3" y="1" width="1" height="1" fill="#fff"/><rect x="4" y="1" width="1" height="1" fill="#00ffff"/><rect x="5" y="1" width="1" height="1" fill="#fff"/><rect x="6" y="1" width="1" height="1" fill="#00ffff"/><rect x="7" y="1" width="1" height="1" fill="#fff"/><rect x="8" y="1" width="1" height="1" fill="#00ffff"/><rect x="9" y="1" width="1" height="1" fill="#fff"/><rect x="10" y="1" width="1" height="1" fill="#00ffff"/><rect x="11" y="1" width="1" height="1" fill="#fff"/><rect x="1" y="2" width="1" height="1" fill="#00ffff"/><rect x="1" y="3" width="1" height="1" fill="#fff"/><rect x="1" y="4" width="1" height="1" fill="#00ffff"/><rect x="1" y="5" width="1" height="1" fill="#fff"/><rect x="1" y="6" width="1" height="1" fill="#00ffff"/><rect x="1" y="7" width="1" height="1" fill="#fff"/><rect x="1" y="8" width="1" height="1" fill="#00ffff"/><rect x="1" y="9" width="1" height="1" fill="#fff"/><rect x="2" y="2" width="8" height="1" fill="#000"/><rect x="2" y="3" width="1" height="2" fill="#000"/><rect x="3" y="3" width="6" height="1" fill="#fff"/><rect x="9" y="3" width="1" height="1" fill="#e0e0e0"/><rect x="3" y="4" width="7" height="1" fill="#c0c0c0"/><rect x="3" y="6" width="1" height="1" fill="#000"/><rect x="4" y="6" width="1" height="1" fill="#fff"/><rect x="5" y="6" width="1" height="1" fill="#000"/><rect x="6" y="6" width="1" height="1" fill="#fff"/><rect x="7" y="6" width="1" height="1" fill="#000"/><rect x="8" y="6" width="1" height="1" fill="#fff"/><rect x="9" y="6" width="1" height="1" fill="#000"/><rect x="10" y="6" width="1" height="1" fill="#fff"/><rect x="11" y="6" width="1" height="1" fill="#000"/><rect x="3" y="8" width="1" height="1" fill="#000"/><rect x="4" y="8" width="1" height="1" fill="#fff"/><rect x="5" y="8" width="1" height="1" fill="#000"/><rect x="6" y="8" width="1" height="1" fill="#fff"/><rect x="7" y="8" width="1" height="1" fill="#000"/><rect x="8" y="8" width="1" height="1" fill="#fff"/><rect x="9" y="8" width="1" height="1" fill="#000"/><rect x="10" y="8" width="1" height="1" fill="#fff"/><rect x="11" y="8" width="1" height="1" fill="#000"/></svg>
<span class="t" style="right:414.50px;top:353.90px;font-size:21.7px;color:#6d6d6d;">240,000</span>
<div class="a" style="left:410px;top:398px;width:228px;height:42px;background:#fff;border:1px solid #7a7a7a;box-sizing:border-box"></div>
<div class="a" style="left:594px;top:400px;width:42px;height:38px;background:#f0f0f0;box-sizing:border-box;border-top:1px solid #fff;border-left:1px solid #fff;border-right:1px solid #696969;border-bottom:1px solid #696969"></div>
<div class="a" style="left:634px;top:401px;width:1px;height:36px;background:#a0a0a0"></div>
<div class="a" style="left:595px;top:436px;width:40px;height:1px;background:#a0a0a0"></div>
<div class="a" style="left:595px;top:401px;width:1px;height:35px;background:#fbfbfb"></div>
<svg class="a" style="left:601px;top:407px" width="28" height="24" viewBox="0 0 14 12" shape-rendering="crispEdges"><rect x="1" y="0" width="12" height="1" fill="#008080"/><rect x="0" y="1" width="13" height="10" fill="#008080"/><rect x="13" y="1" width="1" height="10" fill="#000"/><rect x="1" y="11" width="12" height="1" fill="#000"/><rect x="2" y="10" width="11" height="1" fill="#000080"/><rect x="12" y="2" width="1" height="9" fill="#000080"/><rect x="1" y="1" width="1" height="1" fill="#fff"/><rect x="2" y="1" width="1" height="1" fill="#00ffff"/><rect x="3" y="1" width="1" height="1" fill="#fff"/><rect x="4" y="1" width="1" height="1" fill="#00ffff"/><rect x="5" y="1" width="1" height="1" fill="#fff"/><rect x="6" y="1" width="1" height="1" fill="#00ffff"/><rect x="7" y="1" width="1" height="1" fill="#fff"/><rect x="8" y="1" width="1" height="1" fill="#00ffff"/><rect x="9" y="1" width="1" height="1" fill="#fff"/><rect x="10" y="1" width="1" height="1" fill="#00ffff"/><rect x="11" y="1" width="1" height="1" fill="#fff"/><rect x="1" y="2" width="1" height="1" fill="#00ffff"/><rect x="1" y="3" width="1" height="1" fill="#fff"/><rect x="1" y="4" width="1" height="1" fill="#00ffff"/><rect x="1" y="5" width="1" height="1" fill="#fff"/><rect x="1" y="6" width="1" height="1" fill="#00ffff"/><rect x="1" y="7" width="1" height="1" fill="#fff"/><rect x="1" y="8" width="1" height="1" fill="#00ffff"/><rect x="1" y="9" width="1" height="1" fill="#fff"/><rect x="2" y="2" width="8" height="1" fill="#000"/><rect x="2" y="3" width="1" height="2" fill="#000"/><rect x="3" y="3" width="6" height="1" fill="#fff"/><rect x="9" y="3" width="1" height="1" fill="#e0e0e0"/><rect x="3" y="4" width="7" height="1" fill="#c0c0c0"/><rect x="3" y="6" width="1" height="1" fill="#000"/><rect x="4" y="6" width="1" height="1" fill="#fff"/><rect x="5" y="6" width="1" height="1" fill="#000"/><rect x="6" y="6" width="1" height="1" fill="#fff"/><rect x="7" y="6" width="1" height="1" fill="#000"/><rect x="8" y="6" width="1" height="1" fill="#fff"/><rect x="9" y="6" width="1" height="1" fill="#000"/><rect x="10" y="6" width="1" height="1" fill="#fff"/><rect x="11" y="6" width="1" height="1" fill="#000"/><rect x="3" y="8" width="1" height="1" fill="#000"/><rect x="4" y="8" width="1" height="1" fill="#fff"/><rect x="5" y="8" width="1" height="1" fill="#000"/><rect x="6" y="8" width="1" height="1" fill="#fff"/><rect x="7" y="8" width="1" height="1" fill="#000"/><rect x="8" y="8" width="1" height="1" fill="#fff"/><rect x="9" y="8" width="1" height="1" fill="#000"/><rect x="10" y="8" width="1" height="1" fill="#fff"/><rect x="11" y="8" width="1" height="1" fill="#000"/></svg>
<span class="t" style="right:414.50px;top:403.90px;font-size:21.7px;color:#6d6d6d;">249,998</span>
<div class="a" style="left:644px;top:348px;width:228px;height:42px;background:#fff;border:1px solid #7a7a7a;box-sizing:border-box"></div>
<div class="a" style="left:828px;top:350px;width:42px;height:38px;background:#f0f0f0;box-sizing:border-box;border-top:1px solid #fff;border-left:1px solid #fff;border-right:1px solid #696969;border-bottom:1px solid #696969"></div>
<div class="a" style="left:868px;top:351px;width:1px;height:36px;background:#a0a0a0"></div>
<div class="a" style="left:829px;top:386px;width:40px;height:1px;background:#a0a0a0"></div>
<div class="a" style="left:829px;top:351px;width:1px;height:35px;background:#fbfbfb"></div>
<svg class="a" style="left:835px;top:357px" width="28" height="24" viewBox="0 0 14 12" shape-rendering="crispEdges"><rect x="1" y="0" width="12" height="1" fill="#008080"/><rect x="0" y="1" width="13" height="10" fill="#008080"/><rect x="13" y="1" width="1" height="10" fill="#000"/><rect x="1" y="11" width="12" height="1" fill="#000"/><rect x="2" y="10" width="11" height="1" fill="#000080"/><rect x="12" y="2" width="1" height="9" fill="#000080"/><rect x="1" y="1" width="1" height="1" fill="#fff"/><rect x="2" y="1" width="1" height="1" fill="#00ffff"/><rect x="3" y="1" width="1" height="1" fill="#fff"/><rect x="4" y="1" width="1" height="1" fill="#00ffff"/><rect x="5" y="1" width="1" height="1" fill="#fff"/><rect x="6" y="1" width="1" height="1" fill="#00ffff"/><rect x="7" y="1" width="1" height="1" fill="#fff"/><rect x="8" y="1" width="1" height="1" fill="#00ffff"/><rect x="9" y="1" width="1" height="1" fill="#fff"/><rect x="10" y="1" width="1" height="1" fill="#00ffff"/><rect x="11" y="1" width="1" height="1" fill="#fff"/><rect x="1" y="2" width="1" height="1" fill="#00ffff"/><rect x="1" y="3" width="1" height="1" fill="#fff"/><rect x="1" y="4" width="1" height="1" fill="#00ffff"/><rect x="1" y="5" width="1" height="1" fill="#fff"/><rect x="1" y="6" width="1" height="1" fill="#00ffff"/><rect x="1" y="7" width="1" height="1" fill="#fff"/><rect x="1" y="8" width="1" height="1" fill="#00ffff"/><rect x="1" y="9" width="1" height="1" fill="#fff"/><rect x="2" y="2" width="8" height="1" fill="#000"/><rect x="2" y="3" width="1" height="2" fill="#000"/><rect x="3" y="3" width="6" height="1" fill="#fff"/><rect x="9" y="3" width="1" height="1" fill="#e0e0e0"/><rect x="3" y="4" width="7" height="1" fill="#c0c0c0"/><rect x="3" y="6" width="1" height="1" fill="#000"/><rect x="4" y="6" width="1" height="1" fill="#fff"/><rect x="5" y="6" width="1" height="1" fill="#000"/><rect x="6" y="6" width="1" height="1" fill="#fff"/><rect x="7" y="6" width="1" height="1" fill="#000"/><rect x="8" y="6" width="1" height="1" fill="#fff"/><rect x="9" y="6" width="1" height="1" fill="#000"/><rect x="10" y="6" width="1" height="1" fill="#fff"/><rect x="11" y="6" width="1" height="1" fill="#000"/><rect x="3" y="8" width="1" height="1" fill="#000"/><rect x="4" y="8" width="1" height="1" fill="#fff"/><rect x="5" y="8" width="1" height="1" fill="#000"/><rect x="6" y="8" width="1" height="1" fill="#fff"/><rect x="7" y="8" width="1" height="1" fill="#000"/><rect x="8" y="8" width="1" height="1" fill="#fff"/><rect x="9" y="8" width="1" height="1" fill="#000"/><rect x="10" y="8" width="1" height="1" fill="#fff"/><rect x="11" y="8" width="1" height="1" fill="#000"/></svg>
<span class="t" style="right:180.50px;top:353.90px;font-size:21.7px;color:#6d6d6d;">629,992</span>
<div class="a" style="left:644px;top:398px;width:228px;height:42px;background:#fff;border:1px solid #7a7a7a;box-sizing:border-box"></div>
<div class="a" style="left:828px;top:400px;width:42px;height:38px;background:#f0f0f0;box-sizing:border-box;border-top:1px solid #fff;border-left:1px solid #fff;border-right:1px solid #696969;border-bottom:1px solid #696969"></div>
<div class="a" style="left:868px;top:401px;width:1px;height:36px;background:#a0a0a0"></div>
<div class="a" style="left:829px;top:436px;width:40px;height:1px;background:#a0a0a0"></div>
<div class="a" style="left:829px;top:401px;width:1px;height:35px;background:#fbfbfb"></div>
<svg class="a" style="left:835px;top:407px" width="28" height="24" viewBox="0 0 14 12" shape-rendering="crispEdges"><rect x="1" y="0" width="12" height="1" fill="#008080"/><rect x="0" y="1" width="13" height="10" fill="#008080"/><rect x="13" y="1" width="1" height="10" fill="#000"/><rect x="1" y="11" width="12" height="1" fill="#000"/><rect x="2" y="10" width="11" height="1" fill="#000080"/><rect x="12" y="2" width="1" height="9" fill="#000080"/><rect x="1" y="1" width="1" height="1" fill="#fff"/><rect x="2" y="1" width="1" height="1" fill="#00ffff"/><rect x="3" y="1" width="1" height="1" fill="#fff"/><rect x="4" y="1" width="1" height="1" fill="#00ffff"/><rect x="5" y="1" width="1" height="1" fill="#fff"/><rect x="6" y="1" width="1" height="1" fill="#00ffff"/><rect x="7" y="1" width="1" height="1" fill="#fff"/><rect x="8" y="1" width="1" height="1" fill="#00ffff"/><rect x="9" y="1" width="1" height="1" fill="#fff"/><rect x="10" y="1" width="1" height="1" fill="#00ffff"/><rect x="11" y="1" width="1" height="1" fill="#fff"/><rect x="1" y="2" width="1" height="1" fill="#00ffff"/><rect x="1" y="3" width="1" height="1" fill="#fff"/><rect x="1" y="4" width="1" height="1" fill="#00ffff"/><rect x="1" y="5" width="1" height="1" fill="#fff"/><rect x="1" y="6" width="1" height="1" fill="#00ffff"/><rect x="1" y="7" width="1" height="1" fill="#fff"/><rect x="1" y="8" width="1" height="1" fill="#00ffff"/><rect x="1" y="9" width="1" height="1" fill="#fff"/><rect x="2" y="2" width="8" height="1" fill="#000"/><rect x="2" y="3" width="1" height="2" fill="#000"/><rect x="3" y="3" width="6" height="1" fill="#fff"/><rect x="9" y="3" width="1" height="1" fill="#e0e0e0"/><rect x="3" y="4" width="7" height="1" fill="#c0c0c0"/><rect x="3" y="6" width="1" height="1" fill="#000"/><rect x="4" y="6" width="1" height="1" fill="#fff"/><rect x="5" y="6" width="1" height="1" fill="#000"/><rect x="6" y="6" width="1" height="1" fill="#fff"/><rect x="7" y="6" width="1" height="1" fill="#000"/><rect x="8" y="6" width="1" height="1" fill="#fff"/><rect x="9" y="6" width="1" height="1" fill="#000"/><rect x="10" y="6" width="1" height="1" fill="#fff"/><rect x="11" y="6" width="1" height="1" fill="#000"/><rect x="3" y="8" width="1" height="1" fill="#000"/><rect x="4" y="8" width="1" height="1" fill="#fff"/><rect x="5" y="8" width="1" height="1" fill="#000"/><rect x="6" y="8" width="1" height="1" fill="#fff"/><rect x="7" y="8" width="1" height="1" fill="#000"/><rect x="8" y="8" width="1" height="1" fill="#fff"/><rect x="9" y="8" width="1" height="1" fill="#000"/><rect x="10" y="8" width="1" height="1" fill="#fff"/><rect x="11" y="8" width="1" height="1" fill="#000"/></svg>
<span class="t" style="right:180.50px;top:403.90px;font-size:21.7px;color:#6d6d6d;">629,993</span>
<span class="t" style="left:55.70px;top:464.65px;font-size:21.7px;color:#000;">Material:</span>
<div class="a" style="left:156px;top:454px;width:165px;height:34px;background:#fff;border:1px solid #7a7a7a;box-sizing:border-box"></div>
<span class="t" style="left:158.80px;top:459.65px;font-size:21.7px;color:#000;">PVC</span>
<svg class="a" style="left:296.4px;top:467.3px" width="16" height="9" viewBox="0 0 16 9" ><path d="M1.8 1 L8 7.2 L14.2 1" stroke="#404040" stroke-width="1.35" fill="none"/></svg>
<div class="a" style="left:321px;top:454px;width:1px;height:35px;background:#949494"></div>
<div class="a" style="left:322px;top:454px;width:1px;height:35px;background:#c4c4c4"></div>
<div class="a" style="left:323px;top:454px;width:1px;height:35px;background:#fcfcfc"></div>
<div class="a" style="left:324px;top:454px;width:1px;height:35px;background:#c0c0c0"></div>
<div class="a" style="left:325px;top:454px;width:2px;height:35px;background:#ababab"></div>
<div class="a" style="left:327px;top:454px;width:1px;height:35px;background:#c4c4c4"></div>
<div class="a" style="left:328px;top:454px;width:1px;height:35px;background:#fcfcfc"></div>
<div class="a" style="left:329px;top:454px;width:377px;height:34px;background:#fff;border:1px solid #7a7a7a;box-sizing:border-box"></div>
<span class="t" style="left:331.80px;top:459.65px;font-size:21.7px;color:#000;">Polyvinylchlorid</span>
<svg class="a" style="left:681.4px;top:467.3px" width="16" height="9" viewBox="0 0 16 9" ><path d="M1.8 1 L8 7.2 L14.2 1" stroke="#404040" stroke-width="1.35" fill="none"/></svg>
<div class="a" style="left:52px;top:521px;width:882px;height:100px;border:1px solid #dcdcdc;box-sizing:border-box"></div>
<div class="a" style="left:60px;top:521px;width:284px;height:1px;background:#f0f0f0"></div>
<div class="a" style="left:74px;top:509px;width:26px;height:26px;background:#fff;border:2px solid #333;box-sizing:border-box"></div>
<span class="t" style="left:108.50px;top:509.65px;font-size:21.7px;color:#000;letter-spacing:0.07px">Schutzrohr - Profil [mm]</span>
<div class="a" style="left:60px;top:560px;width:268px;height:34px;background:#fff;border:1px solid #7a7a7a;box-sizing:border-box"></div>
<span class="t" style="left:62.80px;top:565.65px;font-size:21.7px;color:#000;">Kreisprofil</span>
<svg class="a" style="left:303.4px;top:573.3px" width="16" height="9" viewBox="0 0 16 9" ><path d="M1.8 1 L8 7.2 L14.2 1" stroke="#404040" stroke-width="1.35" fill="none"/></svg>
<span class="t" style="left:348.00px;top:568.65px;font-size:21.7px;color:#000;">Höhe:</span>
<div class="a" style="left:412px;top:560px;width:210px;height:42px;background:#fff;border:1px solid #7a7a7a;box-sizing:border-box"></div>
<div class="a" style="left:578px;top:562px;width:42px;height:38px;background:#f0f0f0;box-sizing:border-box;border-top:1px solid #fff;border-left:1px solid #fff;border-right:1px solid #696969;border-bottom:1px solid #696969"></div>
<div class="a" style="left:618px;top:563px;width:1px;height:36px;background:#a0a0a0"></div>
<div class="a" style="left:579px;top:598px;width:40px;height:1px;background:#a0a0a0"></div>
<div class="a" style="left:579px;top:563px;width:1px;height:35px;background:#fbfbfb"></div>
<svg class="a" style="left:585px;top:569px" width="28" height="24" viewBox="0 0 14 12" shape-rendering="crispEdges"><rect x="1" y="0" width="12" height="1" fill="#008080"/><rect x="0" y="1" width="13" height="10" fill="#008080"/><rect x="13" y="1" width="1" height="10" fill="#000"/><rect x="1" y="11" width="12" height="1" fill="#000"/><rect x="2" y="10" width="11" height="1" fill="#000080"/><rect x="12" y="2" width="1" height="9" fill="#000080"/><rect x="1" y="1" width="1" height="1" fill="#fff"/><rect x="2" y="1" width="1" height="1" fill="#00ffff"/><rect x="3" y="1" width="1" height="1" fill="#fff"/><rect x="4" y="1" width="1" height="1" fill="#00ffff"/><rect x="5" y="1" width="1" height="1" fill="#fff"/><rect x="6" y="1" width="1" height="1" fill="#00ffff"/><rect x="7" y="1" width="1" height="1" fill="#fff"/><rect x="8" y="1" width="1" height="1" fill="#00ffff"/><rect x="9" y="1" width="1" height="1" fill="#fff"/><rect x="10" y="1" width="1" height="1" fill="#00ffff"/><rect x="11" y="1" width="1" height="1" fill="#fff"/><rect x="1" y="2" width="1" height="1" fill="#00ffff"/><rect x="1" y="3" width="1" height="1" fill="#fff"/><rect x="1" y="4" width="1" height="1" fill="#00ffff"/><rect x="1" y="5" width="1" height="1" fill="#fff"/><rect x="1" y="6" width="1" height="1" fill="#00ffff"/><rect x="1" y="7" width="1" height="1" fill="#fff"/><rect x="1" y="8" width="1" height="1" fill="#00ffff"/><rect x="1" y="9" width="1" height="1" fill="#fff"/><rect x="2" y="2" width="8" height="1" fill="#000"/><rect x="2" y="3" width="1" height="2" fill="#000"/><rect x="3" y="3" width="6" height="1" fill="#fff"/><rect x="9" y="3" width="1" height="1" fill="#e0e0e0"/><rect x="3" y="4" width="7" height="1" fill="#c0c0c0"/><rect x="3" y="6" width="1" height="1" fill="#000"/><rect x="4" y="6" width="1" height="1" fill="#fff"/><rect x="5" y="6" width="1" height="1" fill="#000"/><rect x="6" y="6" width="1" height="1" fill="#fff"/><rect x="7" y="6" width="1" height="1" fill="#000"/><rect x="8" y="6" width="1" height="1" fill="#fff"/><rect x="9" y="6" width="1" height="1" fill="#000"/><rect x="10" y="6" width="1" height="1" fill="#fff"/><rect x="11" y="6" width="1" height="1" fill="#000"/><rect x="3" y="8" width="1" height="1" fill="#000"/><rect x="4" y="8" width="1" height="1" fill="#fff"/><rect x="5" y="8" width="1" height="1" fill="#000"/><rect x="6" y="8" width="1" height="1" fill="#fff"/><rect x="7" y="8" width="1" height="1" fill="#000"/><rect x="8" y="8" width="1" height="1" fill="#fff"/><rect x="9" y="8" width="1" height="1" fill="#000"/><rect x="10" y="8" width="1" height="1" fill="#fff"/><rect x="11" y="8" width="1" height="1" fill="#000"/></svg>
<span class="t" style="right:430.50px;top:565.90px;font-size:21.7px;color:#000;">0</span>
<span class="t" style="left:653.90px;top:568.65px;font-size:21.7px;color:#000;">Breite:</span>
<div class="a" style="left:718px;top:560px;width:210px;height:42px;background:#fff;border:1px solid #7a7a7a;box-sizing:border-box"></div>
<div class="a" style="left:884px;top:562px;width:42px;height:38px;background:#f0f0f0;box-sizing:border-box;border-top:1px solid #fff;border-left:1px solid #fff;border-right:1px solid #696969;border-bottom:1px solid #696969"></div>
<div class="a" style="left:924px;top:563px;width:1px;height:36px;background:#a0a0a0"></div>
<div class="a" style="left:885px;top:598px;width:40px;height:1px;background:#a0a0a0"></div>
<div class="a" style="left:885px;top:563px;width:1px;height:35px;background:#fbfbfb"></div>
<svg class="a" style="left:891px;top:569px" width="28" height="24" viewBox="0 0 14 12" shape-rendering="crispEdges"><rect x="1" y="0" width="12" height="1" fill="#008080"/><rect x="0" y="1" width="13" height="10" fill="#008080"/><rect x="13" y="1" width="1" height="10" fill="#000"/><rect x="1" y="11" width="12" height="1" fill="#000"/><rect x="2" y="10" width="11" height="1" fill="#000080"/><rect x="12" y="2" width="1" height="9" fill="#000080"/><rect x="1" y="1" width="1" height="1" fill="#fff"/><rect x="2" y="1" width="1" height="1" fill="#00ffff"/><rect x="3" y="1" width="1" height="1" fill="#fff"/><rect x="4" y="1" width="1" height="1" fill="#00ffff"/><rect x="5" y="1" width="1" height="1" fill="#fff"/><rect x="6" y="1" width="1" height="1" fill="#00ffff"/><rect x="7" y="1" width="1" height="1" fill="#fff"/><rect x="8" y="1" width="1" height="1" fill="#00ffff"/><rect x="9" y="1" width="1" height="1" fill="#fff"/><rect x="10" y="1" width="1" height="1" fill="#00ffff"/><rect x="11" y="1" width="1" height="1" fill="#fff"/><rect x="1" y="2" width="1" height="1" fill="#00ffff"/><rect x="1" y="3" width="1" height="1" fill="#fff"/><rect x="1" y="4" width="1" height="1" fill="#00ffff"/><rect x="1" y="5" width="1" height="1" fill="#fff"/><rect x="1" y="6" width="1" height="1" fill="#00ffff"/><rect x="1" y="7" width="1" height="1" fill="#fff"/><rect x="1" y="8" width="1" height="1" fill="#00ffff"/><rect x="1" y="9" width="1" height="1" fill="#fff"/><rect x="2" y="2" width="8" height="1" fill="#000"/><rect x="2" y="3" width="1" height="2" fill="#000"/><rect x="3" y="3" width="6" height="1" fill="#fff"/><rect x="9" y="3" width="1" height="1" fill="#e0e0e0"/><rect x="3" y="4" width="7" height="1" fill="#c0c0c0"/><rect x="3" y="6" width="1" height="1" fill="#000"/><rect x="4" y="6" width="1" height="1" fill="#fff"/><rect x="5" y="6" width="1" height="1" fill="#000"/><rect x="6" y="6" width="1" height="1" fill="#fff"/><rect x="7" y="6" width="1" height="1" fill="#000"/><rect x="8" y="6" width="1" height="1" fill="#fff"/><rect x="9" y="6" width="1" height="1" fill="#000"/><rect x="10" y="6" width="1" height="1" fill="#fff"/><rect x="11" y="6" width="1" height="1" fill="#000"/><rect x="3" y="8" width="1" height="1" fill="#000"/><rect x="4" y="8" width="1" height="1" fill="#fff"/><rect x="5" y="8" width="1" height="1" fill="#000"/><rect x="6" y="8" width="1" height="1" fill="#fff"/><rect x="7" y="8" width="1" height="1" fill="#000"/><rect x="8" y="8" width="1" height="1" fill="#fff"/><rect x="9" y="8" width="1" height="1" fill="#000"/><rect x="10" y="8" width="1" height="1" fill="#fff"/><rect x="11" y="8" width="1" height="1" fill="#000"/></svg>
<span class="t" style="right:124.50px;top:565.90px;font-size:21.7px;color:#6d6d6d;">0</span>
<div class="a" style="left:45px;top:543px;width:901px;height:70px;border:10px solid #ff007c;box-sizing:border-box"></div>
<div class="a" style="left:52px;top:647px;width:882px;height:145px;border:1px solid #dcdcdc;box-sizing:border-box"></div>
<div class="a" style="left:60px;top:647px;width:118px;height:1px;background:#f0f0f0"></div>
<span class="t" style="left:66.50px;top:636.65px;font-size:21.7px;color:#000;letter-spacing:0.2px">Profil [mm]</span>
<div class="a" style="left:651px;top:645px;width:272px;height:32px;background:#e1e1e1;border:1px solid #c4c4c4;box-sizing:border-box"></div>
<span class="t" style="left:697.50px;top:649.95px;font-size:21.7px;color:#000;">aus Material-DB ...</span>
<div class="a" style="left:60px;top:686px;width:268px;height:34px;background:#fff;border:1px solid #7a7a7a;box-sizing:border-box"></div>
<span class="t" style="left:62.80px;top:691.65px;font-size:21.7px;color:#000;">Kreisprofil</span>
<svg class="a" style="left:303.4px;top:699.3px" width="16" height="9" viewBox="0 0 16 9" ><path d="M1.8 1 L8 7.2 L14.2 1" stroke="#404040" stroke-width="1.35" fill="none"/></svg>
<span class="t" style="left:348.00px;top:694.65px;font-size:21.7px;color:#000;">Höhe:</span>
<div class="a" style="left:412px;top:686px;width:210px;height:42px;background:#fff;border:1px solid #7a7a7a;box-sizing:border-box"></div>
<div class="a" style="left:578px;top:688px;width:42px;height:38px;background:#f0f0f0;box-sizing:border-box;border-top:1px solid #fff;border-left:1px solid #fff;border-right:1px solid #696969;border-bottom:1px solid #696969"></div>
<div class="a" style="left:618px;top:689px;width:1px;height:36px;background:#a0a0a0"></div>
<div class="a" style="left:579px;top:724px;width:40px;height:1px;background:#a0a0a0"></div>
<div class="a" style="left:579px;top:689px;width:1px;height:35px;background:#fbfbfb"></div>
<svg class="a" style="left:585px;top:695px" width="28" height="24" viewBox="0 0 14 12" shape-rendering="crispEdges"><rect x="1" y="0" width="12" height="1" fill="#008080"/><rect x="0" y="1" width="13" height="10" fill="#008080"/><rect x="13" y="1" width="1" height="10" fill="#000"/><rect x="1" y="11" width="12" height="1" fill="#000"/><rect x="2" y="10" width="11" height="1" fill="#000080"/><rect x="12" y="2" width="1" height="9" fill="#000080"/><rect x="1" y="1" width="1" height="1" fill="#fff"/><rect x="2" y="1" width="1" height="1" fill="#00ffff"/><rect x="3" y="1" width="1" height="1" fill="#fff"/><rect x="4" y="1" width="1" height="1" fill="#00ffff"/><rect x="5" y="1" width="1" height="1" fill="#fff"/><rect x="6" y="1" width="1" height="1" fill="#00ffff"/><rect x="7" y="1" width="1" height="1" fill="#fff"/><rect x="8" y="1" width="1" height="1" fill="#00ffff"/><rect x="9" y="1" width="1" height="1" fill="#fff"/><rect x="10" y="1" width="1" height="1" fill="#00ffff"/><rect x="11" y="1" width="1" height="1" fill="#fff"/><rect x="1" y="2" width="1" height="1" fill="#00ffff"/><rect x="1" y="3" width="1" height="1" fill="#fff"/><rect x="1" y="4" width="1" height="1" fill="#00ffff"/><rect x="1" y="5" width="1" height="1" fill="#fff"/><rect x="1" y="6" width="1" height="1" fill="#00ffff"/><rect x="1" y="7" width="1" height="1" fill="#fff"/><rect x="1" y="8" width="1" height="1" fill="#00ffff"/><rect x="1" y="9" width="1" height="1" fill="#fff"/><rect x="2" y="2" width="8" height="1" fill="#000"/><rect x="2" y="3" width="1" height="2" fill="#000"/><rect x="3" y="3" width="6" height="1" fill="#fff"/><rect x="9" y="3" width="1" height="1" fill="#e0e0e0"/><rect x="3" y="4" width="7" height="1" fill="#c0c0c0"/><rect x="3" y="6" width="1" height="1" fill="#000"/><rect x="4" y="6" width="1" height="1" fill="#fff"/><rect x="5" y="6" width="1" height="1" fill="#000"/><rect x="6" y="6" width="1" height="1" fill="#fff"/><rect x="7" y="6" width="1" height="1" fill="#000"/><rect x="8" y="6" width="1" height="1" fill="#fff"/><rect x="9" y="6" width="1" height="1" fill="#000"/><rect x="10" y="6" width="1" height="1" fill="#fff"/><rect x="11" y="6" width="1" height="1" fill="#000"/><rect x="3" y="8" width="1" height="1" fill="#000"/><rect x="4" y="8" width="1" height="1" fill="#fff"/><rect x="5" y="8" width="1" height="1" fill="#000"/><rect x="6" y="8" width="1" height="1" fill="#fff"/><rect x="7" y="8" width="1" height="1" fill="#000"/><rect x="8" y="8" width="1" height="1" fill="#fff"/><rect x="9" y="8" width="1" height="1" fill="#000"/><rect x="10" y="8" width="1" height="1" fill="#fff"/><rect x="11" y="8" width="1" height="1" fill="#000"/></svg>
<span class="t" style="right:430.50px;top:691.90px;font-size:21.7px;color:#000;">500</span>
<span class="t" style="left:348.20px;top:744.65px;font-size:21.7px;color:#000;">Breite:</span>
<div class="a" style="left:412px;top:736px;width:210px;height:42px;background:#fff;border:1px solid #7a7a7a;box-sizing:border-box"></div>
<div class="a" style="left:578px;top:738px;width:42px;height:38px;background:#f0f0f0;box-sizing:border-box;border-top:1px solid #fff;border-left:1px solid #fff;border-right:1px solid #696969;border-bottom:1px solid #696969"></div>
<div class="a" style="left:618px;top:739px;width:1px;height:36px;background:#a0a0a0"></div>
<div class="a" style="left:579px;top:774px;width:40px;height:1px;background:#a0a0a0"></div>
<div class="a" style="left:579px;top:739px;width:1px;height:35px;background:#fbfbfb"></div>
<svg class="a" style="left:585px;top:745px" width="28" height="24" viewBox="0 0 14 12" shape-rendering="crispEdges"><rect x="1" y="0" width="12" height="1" fill="#008080"/><rect x="0" y="1" width="13" height="10" fill="#008080"/><rect x="13" y="1" width="1" height="10" fill="#000"/><rect x="1" y="11" width="12" height="1" fill="#000"/><rect x="2" y="10" width="11" height="1" fill="#000080"/><rect x="12" y="2" width="1" height="9" fill="#000080"/><rect x="1" y="1" width="1" height="1" fill="#fff"/><rect x="2" y="1" width="1" height="1" fill="#00ffff"/><rect x="3" y="1" width="1" height="1" fill="#fff"/><rect x="4" y="1" width="1" height="1" fill="#00ffff"/><rect x="5" y="1" width="1" height="1" fill="#fff"/><rect x="6" y="1" width="1" height="1" fill="#00ffff"/><rect x="7" y="1" width="1" height="1" fill="#fff"/><rect x="8" y="1" width="1" height="1" fill="#00ffff"/><rect x="9" y="1" width="1" height="1" fill="#fff"/><rect x="10" y="1" width="1" height="1" fill="#00ffff"/><rect x="11" y="1" width="1" height="1" fill="#fff"/><rect x="1" y="2" width="1" height="1" fill="#00ffff"/><rect x="1" y="3" width="1" height="1" fill="#fff"/><rect x="1" y="4" width="1" height="1" fill="#00ffff"/><rect x="1" y="5" width="1" height="1" fill="#fff"/><rect x="1" y="6" width="1" height="1" fill="#00ffff"/><rect x="1" y="7" width="1" height="1" fill="#fff"/><rect x="1" y="8" width="1" height="1" fill="#00ffff"/><rect x="1" y="9" width="1" height="1" fill="#fff"/><rect x="2" y="2" width="8" height="1" fill="#000"/><rect x="2" y="3" width="1" height="2" fill="#000"/><rect x="3" y="3" width="6" height="1" fill="#fff"/><rect x="9" y="3" width="1" height="1" fill="#e0e0e0"/><rect x="3" y="4" width="7" height="1" fill="#c0c0c0"/><rect x="3" y="6" width="1" height="1" fill="#000"/><rect x="4" y="6" width="1" height="1" fill="#fff"/><rect x="5" y="6" width="1" height="1" fill="#000"/><rect x="6" y="6" width="1" height="1" fill="#fff"/><rect x="7" y="6" width="1" height="1" fill="#000"/><rect x="8" y="6" width="1" height="1" fill="#fff"/><rect x="9" y="6" width="1" height="1" fill="#000"/><rect x="10" y="6" width="1" height="1" fill="#fff"/><rect x="11" y="6" width="1" height="1" fill="#000"/><rect x="3" y="8" width="1" height="1" fill="#000"/><rect x="4" y="8" width="1" height="1" fill="#fff"/><rect x="5" y="8" width="1" height="1" fill="#000"/><rect x="6" y="8" width="1" height="1" fill="#fff"/><rect x="7" y="8" width="1" height="1" fill="#000"/><rect x="8" y="8" width="1" height="1" fill="#fff"/><rect x="9" y="8" width="1" height="1" fill="#000"/><rect x="10" y="8" width="1" height="1" fill="#fff"/><rect x="11" y="8" width="1" height="1" fill="#000"/></svg>
<span class="t" style="right:430.50px;top:741.90px;font-size:21.7px;color:#6d6d6d;">500</span>
<span class="t" style="left:639.50px;top:694.65px;font-size:21.7px;color:#000;">Innen:</span>
<div class="a" style="left:712px;top:686px;width:210px;height:42px;background:#fff;border:1px solid #7a7a7a;box-sizing:border-box"></div>
<div class="a" style="left:878px;top:688px;width:42px;height:38px;background:#f0f0f0;box-sizing:border-box;border-top:1px solid #fff;border-left:1px solid #fff;border-right:1px solid #696969;border-bottom:1px solid #696969"></div>
<div class="a" style="left:918px;top:689px;width:1px;height:36px;background:#a0a0a0"></div>
<div class="a" style="left:879px;top:724px;width:40px;height:1px;background:#a0a0a0"></div>
<div class="a" style="left:879px;top:689px;width:1px;height:35px;background:#fbfbfb"></div>
<svg class="a" style="left:885px;top:695px" width="28" height="24" viewBox="0 0 14 12" shape-rendering="crispEdges"><rect x="1" y="0" width="12" height="1" fill="#008080"/><rect x="0" y="1" width="13" height="10" fill="#008080"/><rect x="13" y="1" width="1" height="10" fill="#000"/><rect x="1" y="11" width="12" height="1" fill="#000"/><rect x="2" y="10" width="11" height="1" fill="#000080"/><rect x="12" y="2" width="1" height="9" fill="#000080"/><rect x="1" y="1" width="1" height="1" fill="#fff"/><rect x="2" y="1" width="1" height="1" fill="#00ffff"/><rect x="3" y="1" width="1" height="1" fill="#fff"/><rect x="4" y="1" width="1" height="1" fill="#00ffff"/><rect x="5" y="1" width="1" height="1" fill="#fff"/><rect x="6" y="1" width="1" height="1" fill="#00ffff"/><rect x="7" y="1" width="1" height="1" fill="#fff"/><rect x="8" y="1" width="1" height="1" fill="#00ffff"/><rect x="9" y="1" width="1" height="1" fill="#fff"/><rect x="10" y="1" width="1" height="1" fill="#00ffff"/><rect x="11" y="1" width="1" height="1" fill="#fff"/><rect x="1" y="2" width="1" height="1" fill="#00ffff"/><rect x="1" y="3" width="1" height="1" fill="#fff"/><rect x="1" y="4" width="1" height="1" fill="#00ffff"/><rect x="1" y="5" width="1" height="1" fill="#fff"/><rect x="1" y="6" width="1" height="1" fill="#00ffff"/><rect x="1" y="7" width="1" height="1" fill="#fff"/><rect x="1" y="8" width="1" height="1" fill="#00ffff"/><rect x="1" y="9" width="1" height="1" fill="#fff"/><rect x="2" y="2" width="8" height="1" fill="#000"/><rect x="2" y="3" width="1" height="2" fill="#000"/><rect x="3" y="3" width="6" height="1" fill="#fff"/><rect x="9" y="3" width="1" height="1" fill="#e0e0e0"/><rect x="3" y="4" width="7" height="1" fill="#c0c0c0"/><rect x="3" y="6" width="1" height="1" fill="#000"/><rect x="4" y="6" width="1" height="1" fill="#fff"/><rect x="5" y="6" width="1" height="1" fill="#000"/><rect x="6" y="6" width="1" height="1" fill="#fff"/><rect x="7" y="6" width="1" height="1" fill="#000"/><rect x="8" y="6" width="1" height="1" fill="#fff"/><rect x="9" y="6" width="1" height="1" fill="#000"/><rect x="10" y="6" width="1" height="1" fill="#fff"/><rect x="11" y="6" width="1" height="1" fill="#000"/><rect x="3" y="8" width="1" height="1" fill="#000"/><rect x="4" y="8" width="1" height="1" fill="#fff"/><rect x="5" y="8" width="1" height="1" fill="#000"/><rect x="6" y="8" width="1" height="1" fill="#fff"/><rect x="7" y="8" width="1" height="1" fill="#000"/><rect x="8" y="8" width="1" height="1" fill="#fff"/><rect x="9" y="8" width="1" height="1" fill="#000"/><rect x="10" y="8" width="1" height="1" fill="#fff"/><rect x="11" y="8" width="1" height="1" fill="#000"/></svg>
<span class="t" style="right:130.50px;top:691.90px;font-size:21.7px;color:#000;">476</span>
<span class="t" style="left:641.00px;top:744.65px;font-size:21.7px;color:#000;">Wand:</span>
<div class="a" style="left:712px;top:736px;width:210px;height:42px;background:#fff;border:1px solid #7a7a7a;box-sizing:border-box"></div>
<div class="a" style="left:878px;top:738px;width:42px;height:38px;background:#f0f0f0;box-sizing:border-box;border-top:1px solid #fff;border-left:1px solid #fff;border-right:1px solid #696969;border-bottom:1px solid #696969"></div>
<div class="a" style="left:918px;top:739px;width:1px;height:36px;background:#a0a0a0"></div>
<div class="a" style="left:879px;top:774px;width:40px;height:1px;background:#a0a0a0"></div>
<div class="a" style="left:879px;top:739px;width:1px;height:35px;background:#fbfbfb"></div>
<svg class="a" style="left:885px;top:745px" width="28" height="24" viewBox="0 0 14 12" shape-rendering="crispEdges"><rect x="1" y="0" width="12" height="1" fill="#008080"/><rect x="0" y="1" width="13" height="10" fill="#008080"/><rect x="13" y="1" width="1" height="10" fill="#000"/><rect x="1" y="11" width="12" height="1" fill="#000"/><rect x="2" y="10" width="11" height="1" fill="#000080"/><rect x="12" y="2" width="1" height="9" fill="#000080"/><rect x="1" y="1" width="1" height="1" fill="#fff"/><rect x="2" y="1" width="1" height="1" fill="#00ffff"/><rect x="3" y="1" width="1" height="1" fill="#fff"/><rect x="4" y="1" width="1" height="1" fill="#00ffff"/><rect x="5" y="1" width="1" height="1" fill="#fff"/><rect x="6" y="1" width="1" height="1" fill="#00ffff"/><rect x="7" y="1" width="1" height="1" fill="#fff"/><rect x="8" y="1" width="1" height="1" fill="#00ffff"/><rect x="9" y="1" width="1" height="1" fill="#fff"/><rect x="10" y="1" width="1" height="1" fill="#00ffff"/><rect x="11" y="1" width="1" height="1" fill="#fff"/><rect x="1" y="2" width="1" height="1" fill="#00ffff"/><rect x="1" y="3" width="1" height="1" fill="#fff"/><rect x="1" y="4" width="1" height="1" fill="#00ffff"/><rect x="1" y="5" width="1" height="1" fill="#fff"/><rect x="1" y="6" width="1" height="1" fill="#00ffff"/><rect x="1" y="7" width="1" height="1" fill="#fff"/><rect x="1" y="8" width="1" height="1" fill="#00ffff"/><rect x="1" y="9" width="1" height="1" fill="#fff"/><rect x="2" y="2" width="8" height="1" fill="#000"/><rect x="2" y="3" width="1" height="2" fill="#000"/><rect x="3" y="3" width="6" height="1" fill="#fff"/><rect x="9" y="3" width="1" height="1" fill="#e0e0e0"/><rect x="3" y="4" width="7" height="1" fill="#c0c0c0"/><rect x="3" y="6" width="1" height="1" fill="#000"/><rect x="4" y="6" width="1" height="1" fill="#fff"/><rect x="5" y="6" width="1" height="1" fill="#000"/><rect x="6" y="6" width="1" height="1" fill="#fff"/><rect x="7" y="6" width="1" height="1" fill="#000"/><rect x="8" y="6" width="1" height="1" fill="#fff"/><rect x="9" y="6" width="1" height="1" fill="#000"/><rect x="10" y="6" width="1" height="1" fill="#fff"/><rect x="11" y="6" width="1" height="1" fill="#000"/><rect x="3" y="8" width="1" height="1" fill="#000"/><rect x="4" y="8" width="1" height="1" fill="#fff"/><rect x="5" y="8" width="1" height="1" fill="#000"/><rect x="6" y="8" width="1" height="1" fill="#fff"/><rect x="7" y="8" width="1" height="1" fill="#000"/><rect x="8" y="8" width="1" height="1" fill="#fff"/><rect x="9" y="8" width="1" height="1" fill="#000"/><rect x="10" y="8" width="1" height="1" fill="#fff"/><rect x="11" y="8" width="1" height="1" fill="#000"/></svg>
<span class="t" style="right:130.50px;top:741.90px;font-size:21.7px;color:#000;">12,2</span>
<div class="a" style="left:52px;top:806px;width:892px;height:1px;background:#a0a0a0"></div>
<div class="a" style="left:52px;top:807px;width:892px;height:1px;background:#fff"></div>
<div class="a" style="left:36px;top:868px;width:966px;height:2px;background:#fbfbfb"></div>
<div class="a" style="left:3px;top:868px;width:31px;height:1px;background:#9c9c9c"></div>
<div class="a" style="left:36px;top:867px;width:964px;height:1px;background:#e8e8e8"></div>
<div class="a" style="left:131px;top:871px;width:1px;height:43px;background:#d9d9d9"></div>
<div class="a" style="left:261px;top:871px;width:1px;height:43px;background:#d9d9d9"></div>
<div class="a" style="left:741px;top:871px;width:1px;height:43px;background:#d9d9d9"></div>
<span class="t" style="left:51.50px;top:883.05px;font-size:21.7px;color:#000;">2/2</span>
<span class="t" style="left:136.30px;top:883.05px;font-size:21.7px;color:#000;">Geändert</span>
<div class="a" style="left:994px;top:895px;width:4px;height:4px;background:#bfbfbf"></div>
<div class="a" style="left:988px;top:901px;width:4px;height:4px;background:#bfbfbf"></div>
<div class="a" style="left:994px;top:901px;width:4px;height:4px;background:#bfbfbf"></div>
<div class="a" style="left:982px;top:907px;width:4px;height:4px;background:#bfbfbf"></div>
<div class="a" style="left:988px;top:907px;width:4px;height:4px;background:#bfbfbf"></div>
<div class="a" style="left:994px;top:907px;width:4px;height:4px;background:#bfbfbf"></div>
</body></html>
